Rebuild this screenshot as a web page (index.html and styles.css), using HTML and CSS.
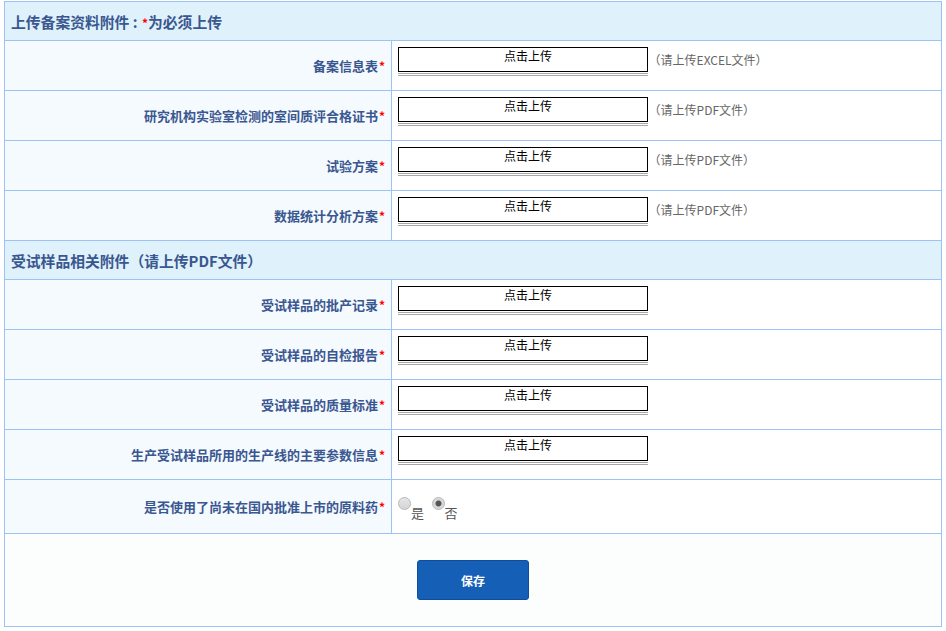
FILE: index.html
```html
<!DOCTYPE html>
<html lang="zh-CN">
<head>
    <meta charset="UTF-8">
    <title>上传备案资料附件</title>
    <link rel="stylesheet" href="styles.css">
</head>
<body>
    <table class="form-table">
        <tr class="section">
            <td colspan="2">上传备案资料附件 : <span class="req">*</span>为必须上传</td>
        </tr>
        <tr>
            <th>备案信息表<span class="req">*</span></th>
            <td>
                <div class="upload"><div class="upload-btn">点击上传</div><div class="upload-bar"></div></div>
                <span class="hint">（请上传EXCEL文件）</span>
            </td>
        </tr>
        <tr>
            <th>研究机构实验室检测的室间质评合格证书<span class="req">*</span></th>
            <td>
                <div class="upload"><div class="upload-btn">点击上传</div><div class="upload-bar"></div></div>
                <span class="hint">（请上传PDF文件）</span>
            </td>
        </tr>
        <tr>
            <th>试验方案<span class="req">*</span></th>
            <td>
                <div class="upload"><div class="upload-btn">点击上传</div><div class="upload-bar"></div></div>
                <span class="hint">（请上传PDF文件）</span>
            </td>
        </tr>
        <tr>
            <th>数据统计分析方案<span class="req">*</span></th>
            <td>
                <div class="upload"><div class="upload-btn">点击上传</div><div class="upload-bar"></div></div>
                <span class="hint">（请上传PDF文件）</span>
            </td>
        </tr>
        <tr class="section">
            <td colspan="2">受试样品相关附件（请上传PDF文件）</td>
        </tr>
        <tr>
            <th>受试样品的批产记录<span class="req">*</span></th>
            <td><div class="upload"><div class="upload-btn">点击上传</div><div class="upload-bar"></div></div></td>
        </tr>
        <tr>
            <th>受试样品的自检报告<span class="req">*</span></th>
            <td><div class="upload"><div class="upload-btn">点击上传</div><div class="upload-bar"></div></div></td>
        </tr>
        <tr>
            <th>受试样品的质量标准<span class="req">*</span></th>
            <td><div class="upload"><div class="upload-btn">点击上传</div><div class="upload-bar"></div></div></td>
        </tr>
        <tr>
            <th>生产受试样品所用的生产线的主要参数信息<span class="req">*</span></th>
            <td><div class="upload"><div class="upload-btn">点击上传</div><div class="upload-bar"></div></div></td>
        </tr>
        <tr class="radio-row">
            <th>是否使用了尚未在国内批准上市的原料药<span class="req">*</span></th>
            <td>
                <label class="radio"><span class="dot"></span><span class="radio-text">是</span></label>
                <label class="radio"><span class="dot checked"></span><span class="radio-text">否</span></label>
            </td>
        </tr>
        <tr class="actions">
            <td colspan="2"><button class="save-btn">保存</button></td>
        </tr>
    </table>
</body>
</html>
```

FILE: styles.css
```css
body {
    margin: 1px 4px;
    font-family: "Noto Sans CJK SC", "Liberation Sans", sans-serif;
    background-color: #fff;
}

.form-table {
    width: 938px;
    border-collapse: collapse;
}

.form-table td,
.form-table th {
    border: 1px solid #9cc3f3;
    padding: 0;
}

.form-table tr {
    height: 50px;
}

.form-table th {
    width: 380px;
    padding-right: 6px;
    background-color: #f5faff;
    color: #3a5790;
    font-size: 13px;
    font-weight: bold;
    text-align: right;
}

.form-table td {
    padding: 6px 0 0 6px;
    vertical-align: top;
}

.req {
    color: #f00;
    font-size: 12px;
    margin-left: 1px;
}

.form-table tr.section {
    height: 39px;
}

.form-table .section td {
    background-color: #dff2fb;
    color: #3a5790;
    font-size: 14.8px;
    font-weight: bold;
    padding: 0 0 0 6px;
    vertical-align: middle;
}

.upload {
    display: inline-block;
    vertical-align: top;
    width: 250px;
}

.upload-btn {
    box-sizing: border-box;
    height: 25px;
    padding-left: 10px;
    border: 1px solid #000;
    background-color: #fff;
    color: #000;
    font-size: 12px;
    line-height: 16px;
    text-align: center;
}

.upload-bar {
    height: 1px;
    margin-top: 1px;
    border-top: 1px solid #a8a8a8;
    border-bottom: 1px solid #a8a8a8;
}

.hint {
    display: inline-block;
    vertical-align: top;
    margin-top: 4px;
    margin-left: -3px;
    color: #666;
    font-size: 12px;
}

.form-table tr.radio-row {
    height: 54px;
}

.form-table .radio-row td {
    padding-top: 17px;
}

.radio {
    display: inline-flex;
    vertical-align: top;
    align-items: flex-start;
    margin-right: 4px;
    color: #555;
    font-size: 13px;
}

.radio .dot {
    box-sizing: border-box;
    width: 13px;
    height: 13px;
    border: 1px solid #b9b9b9;
    border-radius: 50%;
    background: linear-gradient(#e6e6e6, #d4d4d4);
}

.radio .dot.checked {
    background: radial-gradient(circle, #555 0, #555 2.5px, #d8d8d8 3.5px);
}

.radio-text {
    margin-top: 6px;
    line-height: 19px;
}

.form-table tr.actions {
    height: 93px;
}

.form-table .actions td {
    background-color: #fcfefe;
    text-align: center;
    vertical-align: middle;
    padding: 0;
}

.save-btn {
    width: 112px;
    height: 40px;
    background-color: #1560b6;
    border: 1px solid #0d4f9c;
    border-radius: 3px;
    color: #fff;
    font-family: inherit;
    font-size: 12px;
    font-weight: bold;
    cursor: pointer;
}
```
